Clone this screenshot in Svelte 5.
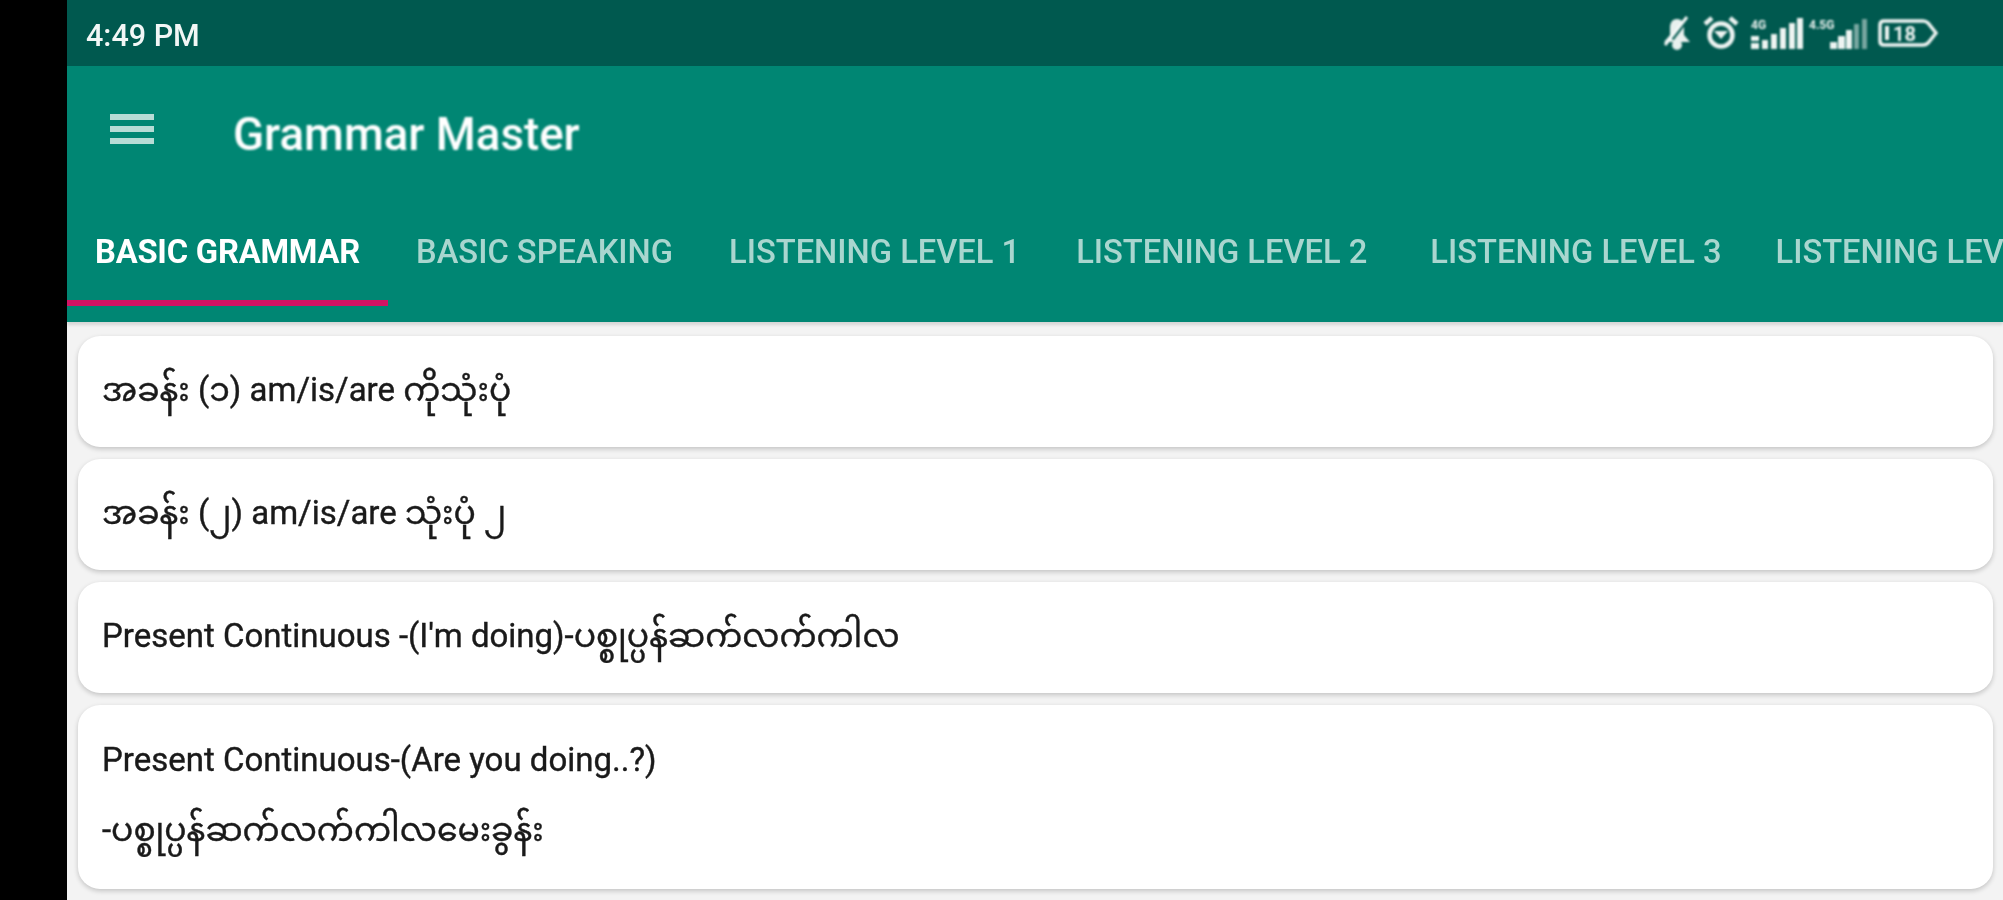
<script>
  const tabs = [
    { label: 'BASIC GRAMMAR', active: true },
    { label: 'BASIC SPEAKING' },
    { label: 'LISTENING LEVEL 1' },
    { label: 'LISTENING LEVEL 2' },
    { label: 'LISTENING LEVEL 3', wide: true },
    { label: 'LISTENING LEVEL 4' }
  ];
  const cards = [
    { lines: ['အခန်း (၁) am/is/are ကိုသုံးပုံ'], kind: 'one' },
    { lines: ['အခန်း (၂) am/is/are သုံးပုံ ၂'], kind: 'one' },
    { lines: ["Present Continuous -(I'm doing)-ပစ္စုပ္ပန်ဆက်လက်ကါလ"], kind: 'one' },
    { lines: ['Present Continuous-(Are you doing..?)', '-ပစ္စုပ္ပန်ဆက်လက်ကါလမေးခွန်း'], kind: 'two' }
  ];
</script>

<div class="shell">
  <div class="bezel"></div>
  <main class="screen">
    <div class="status">
      <span class="time">4:49 PM</span>
      <div class="icons">
        <svg class="bell" width="30" height="36" viewBox="0 0 30 36">
          <path d="M15 4c-5 0-7 4-7 9v7l-6 7h26l-6-7v-7c0-5-2-9-7-9z" fill="#e8f0ee"/>
          <circle cx="15" cy="30" r="5" fill="#e8f0ee"/>
          <path d="M10 24 23 7" stroke="#00594f" stroke-width="4"/>
          <path d="M3 30 25 2" stroke="#f4f8f7" stroke-width="3"/>
        </svg>
        <svg class="alarm" width="36" height="36" viewBox="0 0 36 36" fill="none" stroke="#eef4f2">
          <circle cx="18" cy="20" r="11.5" stroke-width="4.5"/>
          <path d="M2 9 9 3M34 9 27 3" stroke-width="4.5"/>
          <path d="M11 16h14l-7 8z" fill="#eef4f2" stroke="none"/>
        </svg>
        <div class="signal first">
          <span class="net">4G</span>
          <svg width="53" height="36" viewBox="0 0 53 36" fill="#eef4f2">
            <rect x="1" y="21" width="8" height="5"/>
            <rect x="1" y="28" width="8" height="6"/>
            <rect x="12" y="25" width="6" height="9"/>
            <rect x="21" y="19" width="6" height="15"/>
            <rect x="30" y="13" width="6" height="21"/>
            <rect x="39" y="8" width="6" height="26"/>
            <rect x="47" y="3" width="6" height="31"/>
          </svg>
        </div>
        <div class="signal second">
          <span class="net">4.5G</span>
          <svg width="60" height="36" viewBox="0 0 60 36" fill="#eef4f2">
            <rect x="22" y="27" width="7" height="7"/>
            <rect x="30" y="21" width="7" height="13"/>
            <rect x="38" y="15" width="6" height="19"/>
            <rect x="46" y="9" width="5" height="25" opacity=".5"/>
            <rect x="54" y="4" width="5" height="30" opacity=".5"/>
          </svg>
        </div>
        <svg class="battery" width="60" height="28" viewBox="0 0 60 28">
          <path d="M6 2h39q3 0 5 2l8 10-8 10q-2 2-5 2H6q-4 0-4-4V6q0-4 4-4z" fill="none" stroke="#eef4f2" stroke-width="3.5"/>
          <rect x="7" y="7" width="4" height="14" fill="#eef4f2"/>
          <text x="15" y="22" class="level">18</text>
        </svg>
      </div>
    </div>

    <header class="appbar">
      <div class="toolbar">
        <svg class="menu" width="46" height="34" viewBox="0 0 46 34" fill="#b7dcd6">
          <rect x="1" y="2" width="44" height="6"/>
          <rect x="1" y="14" width="44" height="6"/>
          <rect x="1" y="26" width="44" height="6"/>
        </svg>
        <h1>Grammar Master</h1>
      </div>
      <nav class="tabs">
        {#each tabs as tab}
          <div class="tab" class:active={tab.active} class:wide={tab.wide}>{tab.label}</div>
        {/each}
      </nav>
    </header>

    <section class="list">
      {#each cards as card}
        <article class="card {card.kind}">
          {#each card.lines as line}
            <p>{line}</p>
          {/each}
        </article>
      {/each}
    </section>
  </main>
</div>

<style>
  :global(body) {
    margin: 0;
    background: #000;
    overflow: hidden;
  }
  .shell {
    display: flex;
    width: 2003px;
    height: 900px;
    overflow: hidden;
    font-family: Roboto, "Noto Sans", "Noto Sans Myanmar", "Padauk", sans-serif;
  }
  .bezel {
    flex: 0 0 67px;
    background: #000;
  }
  .screen {
    flex: 1;
    min-width: 0;
    background: #f3f3f3;
    display: flex;
    flex-direction: column;
  }
  .status {
    height: 66px;
    flex: none;
    background: #00594f;
    display: flex;
    align-items: center;
    justify-content: space-between;
    padding: 0 65px 0 19px;
    color: #f2f7f6;
    box-sizing: border-box;
  }
  .time {
    font-size: 30.5px;
    font-weight: 500;
    margin-top: 4px;
    filter: blur(0.7px);
  }
  .icons {
    display: flex;
    align-items: center;
    filter: blur(0.9px);
  }
  .alarm {
    margin-left: 11px;
  }
  .signal {
    position: relative;
    height: 36px;
  }
  .signal.first {
    margin-left: 11px;
  }
  .signal.second {
    margin-left: 5px;
  }
  .net {
    position: absolute;
    left: 1px;
    top: 3px;
    font-size: 12px;
    font-weight: 700;
    color: #eef4f2;
  }
  .battery {
    margin-left: 10px;
  }
  .level {
    font-size: 20px;
    font-weight: 700;
    fill: #eef4f2;
  }
  .appbar {
    height: 256px;
    flex: none;
    background: #008673;
    display: flex;
    flex-direction: column;
    box-sizing: border-box;
    box-shadow: 0 3px 3px rgba(0, 0, 0, .12);
    position: relative;
  }
  .toolbar {
    height: 131px;
    display: flex;
    align-items: center;
    padding-left: 42px;
    gap: 78px;
    color: #fff;
  }
  .menu {
    margin-top: -6px;
    filter: blur(0.7px);
  }
  h1 {
    margin: 5px 0 0;
    font-size: 45.7px;
    font-weight: 500;
    filter: blur(0.8px);
  }
  .tabs {
    display: flex;
    height: 109px;
    overflow: hidden;
    flex: none;
  }
  .tab {
    flex: none;
    padding: 7px 28px 0;
    font-size: 32.7px;
    font-weight: 500;
    color: #a9d6cf;
    display: flex;
    align-items: center;
    white-space: nowrap;
    box-sizing: border-box;
    border-bottom: 6px solid transparent;
    filter: blur(0.7px);
  }
  .tab.active {
    color: #fff;
    border-bottom-color: #d01463;
    font-weight: 700;
    letter-spacing: -0.2px;
  }
  .tab.wide {
    margin: 0 -2px 0 7px;
  }
  .list {
    flex: 1;
    display: flex;
    flex-direction: column;
    gap: 12px;
    padding: 14px 10px 0 11px;
    min-height: 0;
  }
  .card {
    background: #fff;
    border-radius: 22px;
    box-shadow: 0 2px 5px rgba(0, 0, 0, .2);
    padding: 0 24px;
    box-sizing: border-box;
    display: flex;
    flex-direction: column;
    justify-content: center;
    flex: none;
  }
  .card.one {
    height: 111px;
  }
  .card.two {
    height: 184px;
    gap: 34px;
    padding-bottom: 4px;
  }
  p {
    margin: -4px 0 0;
    font-size: 33px;
    font-weight: 400;
    line-height: 36px;
    color: #1a1a1a;
    -webkit-text-stroke: 0.4px #1a1a1a;
    filter: blur(0.7px);
  }
  .two p {
    margin-top: 0;
  }
</style>
